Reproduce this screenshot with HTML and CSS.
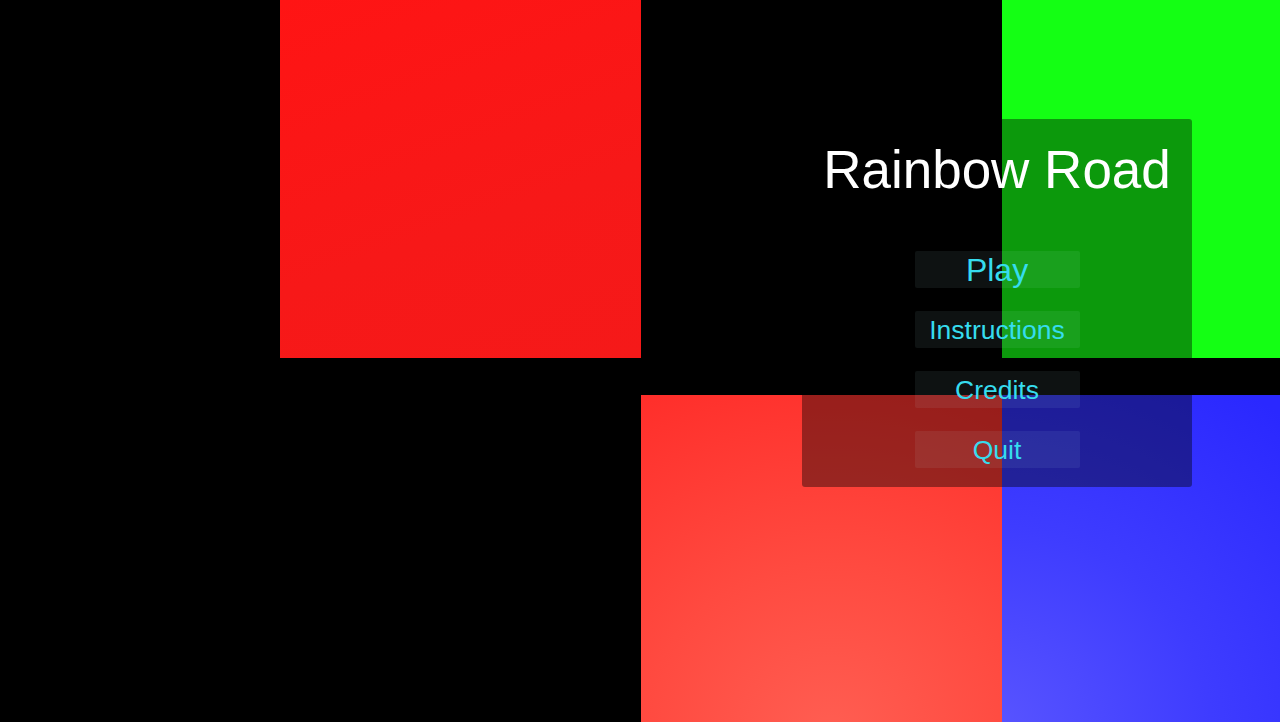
FILE: index.html
```html
<!DOCTYPE html>
<html>
<head>
<meta charset="utf-8">
<title>Rainbow Road</title>
<link rel="stylesheet" href="styles.css">
</head>
<body>
<div class="stage">
  <div class="tiles">
    <div class="tile"></div>
    <div class="tile red"></div>
    <div class="tile"></div>
    <div class="tile green"></div>
    <div class="gap"></div>
    <div class="tile"></div>
    <div class="tile"></div>
    <div class="tile orange"></div>
    <div class="tile blue"></div>
  </div>
  <div class="menu">
    <h1 class="title">Rainbow Road</h1>
    <div class="buttons">
      <button class="btn btn-play">Play</button>
      <button class="btn">Instructions</button>
      <button class="btn">Credits</button>
      <button class="btn">Quit</button>
    </div>
  </div>
</div>
</body>
</html>
```
FILE: styles.css
```css
html, body {
  margin: 0;
  padding: 0;
  background: #000;
}
.stage {
  position: relative;
  width: 1280px;
  height: 722px;
  overflow: hidden;
  background: #000;
  font-family: "Liberation Sans", Arial, sans-serif;
}
.tiles {
  display: grid;
  grid-template-columns: 280px 361px 361px 361px;
  grid-template-rows: 358px 37px 358px;
}
.gap {
  grid-column: 1 / -1;
}
.tile { background: #000; }
.red {
  background: linear-gradient(160deg, #ff1414 0%, #f71818 60%, #f51919 100%);
}
.green {
  background: #14ff14;
}
.orange {
  background: radial-gradient(ellipse 420px 380px at 190px 340px, #ff5e52 0%, #ff4a40 45%, #ff2e2a 100%);
}
.blue {
  background: radial-gradient(ellipse 460px 420px at -20px 340px, #5a56ff 0%, #3e3cff 50%, #2a28ff 100%);
}
.menu {
  position: absolute;
  left: 802px;
  top: 119px;
  width: 390px;
  height: 368px;
  background: rgba(0, 0, 0, 0.4);
  border-radius: 3px;
  display: flex;
  flex-direction: column;
  align-items: center;
}
.title {
  margin: 21px 0 0 0;
  font-weight: normal;
  font-size: 53px;
  line-height: 60px;
  color: #fff;
}
.buttons {
  margin-top: 51px;
  display: flex;
  flex-direction: column;
  gap: 23px;
  align-items: center;
}
.btn {
  width: 165px;
  height: 37px;
  border: none;
  border-radius: 2px;
  padding: 2px 0 0 0;
  background: rgba(200, 255, 255, 0.07);
  color: #36dcee;
  font-family: "Liberation Sans", Arial, sans-serif;
  font-size: 26.5px;
  line-height: 35px;
}
.btn-play {
  font-size: 32px;
}
```
